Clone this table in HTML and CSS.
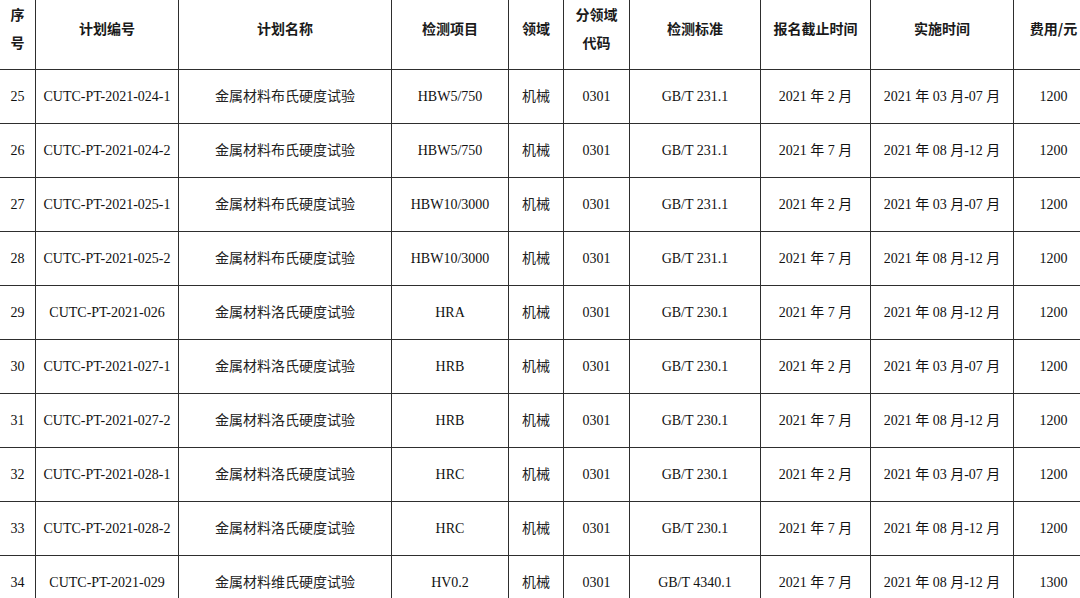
FILE: index.html
```html
<!DOCTYPE html>
<html lang="zh">
<head>
<meta charset="utf-8">
<link rel="stylesheet" href="styles.css">
</head>
<body>
<table class="plan">
  <colgroup>
    <col class="c1"><col class="c2"><col class="c3"><col class="c4"><col class="c5">
    <col class="c6"><col class="c7"><col class="c8"><col class="c9"><col class="c10">
  </colgroup>
  <thead>
    <tr>
      <th>序<br>号</th>
      <th>计划编号</th>
      <th>计划名称</th>
      <th>检测项目</th>
      <th>领域</th>
      <th>分领域<br>代码</th>
      <th>检测标准</th>
      <th>报名截止时间</th>
      <th>实施时间</th>
      <th>费用/元</th>
    </tr>
  </thead>
  <tbody>
    <tr><td>25</td><td>CUTC-PT-2021-024-1</td><td class="name">金属材料布氏硬度试验</td><td>HBW5/750</td><td class="zh">机械</td><td>0301</td><td>GB/T 231.1</td><td>2021 年 2 月</td><td>2021 年 03 月-07 月</td><td>1200</td></tr>
    <tr><td>26</td><td>CUTC-PT-2021-024-2</td><td class="name">金属材料布氏硬度试验</td><td>HBW5/750</td><td class="zh">机械</td><td>0301</td><td>GB/T 231.1</td><td>2021 年 7 月</td><td>2021 年 08 月-12 月</td><td>1200</td></tr>
    <tr><td>27</td><td>CUTC-PT-2021-025-1</td><td class="name">金属材料布氏硬度试验</td><td>HBW10/3000</td><td class="zh">机械</td><td>0301</td><td>GB/T 231.1</td><td>2021 年 2 月</td><td>2021 年 03 月-07 月</td><td>1200</td></tr>
    <tr><td>28</td><td>CUTC-PT-2021-025-2</td><td class="name">金属材料布氏硬度试验</td><td>HBW10/3000</td><td class="zh">机械</td><td>0301</td><td>GB/T 231.1</td><td>2021 年 7 月</td><td>2021 年 08 月-12 月</td><td>1200</td></tr>
    <tr><td>29</td><td>CUTC-PT-2021-026</td><td class="name">金属材料洛氏硬度试验</td><td>HRA</td><td class="zh">机械</td><td>0301</td><td>GB/T 230.1</td><td>2021 年 7 月</td><td>2021 年 08 月-12 月</td><td>1200</td></tr>
    <tr><td>30</td><td>CUTC-PT-2021-027-1</td><td class="name">金属材料洛氏硬度试验</td><td>HRB</td><td class="zh">机械</td><td>0301</td><td>GB/T 230.1</td><td>2021 年 2 月</td><td>2021 年 03 月-07 月</td><td>1200</td></tr>
    <tr><td>31</td><td>CUTC-PT-2021-027-2</td><td class="name">金属材料洛氏硬度试验</td><td>HRB</td><td class="zh">机械</td><td>0301</td><td>GB/T 230.1</td><td>2021 年 7 月</td><td>2021 年 08 月-12 月</td><td>1200</td></tr>
    <tr><td>32</td><td>CUTC-PT-2021-028-1</td><td class="name">金属材料洛氏硬度试验</td><td>HRC</td><td class="zh">机械</td><td>0301</td><td>GB/T 230.1</td><td>2021 年 2 月</td><td>2021 年 03 月-07 月</td><td>1200</td></tr>
    <tr><td>33</td><td>CUTC-PT-2021-028-2</td><td class="name">金属材料洛氏硬度试验</td><td>HRC</td><td class="zh">机械</td><td>0301</td><td>GB/T 230.1</td><td>2021 年 7 月</td><td>2021 年 08 月-12 月</td><td>1200</td></tr>
    <tr><td>34</td><td>CUTC-PT-2021-029</td><td class="name">金属材料维氏硬度试验</td><td>HV0.2</td><td class="zh">机械</td><td>0301</td><td>GB/T 4340.1</td><td>2021 年 7 月</td><td>2021 年 08 月-12 月</td><td>1300</td></tr>
  </tbody>
</table>
</body>
</html>
```

FILE: styles.css
```css
html, body {
  margin: 0;
  padding: 0;
  background: #ffffff;
  overflow: hidden;
}

body {
  width: 1080px;
  height: 598px;
  font-family: "Liberation Serif", "Noto Sans CJK SC", serif;
  color: #111111;
}

.plan {
  table-layout: fixed;
  width: 1094px;
  border-collapse: separate;
  border-spacing: 0;
}

.c1 { width: 36px; }
.c2 { width: 143px; }
.c3 { width: 213px; }
.c4 { width: 117px; }
.c5 { width: 55px; }
.c6 { width: 66px; }
.c7 { width: 131px; }
.c8 { width: 110px; }
.c9 { width: 143px; }
.c10 { width: 80px; }

.plan th,
.plan td {
  box-sizing: border-box;
  border-right: 1px solid #2e2e2e;
  border-bottom: 1px solid #2e2e2e;
  text-align: center;
  vertical-align: middle;
  padding: 0;
  white-space: nowrap;
}

.plan th {
  height: 70px;
  padding-bottom: 13px;
  font-family: "Noto Sans CJK SC", sans-serif;
  font-weight: bold;
  font-size: 14px;
  line-height: 28px;
  color: #1a1a1a;
}

.plan td {
  height: 54px;
  font-size: 14px;
  line-height: 18px;
}

.plan td.name {
  font-family: "Noto Sans CJK SC", sans-serif;
  font-size: 14px;
  letter-spacing: 0;
  padding-bottom: 4px;
  color: #222222;
}

.plan td.zh {
  font-family: "Noto Sans CJK SC", sans-serif;
  font-size: 14px;
  padding-bottom: 4px;
  color: #222222;
}
```
